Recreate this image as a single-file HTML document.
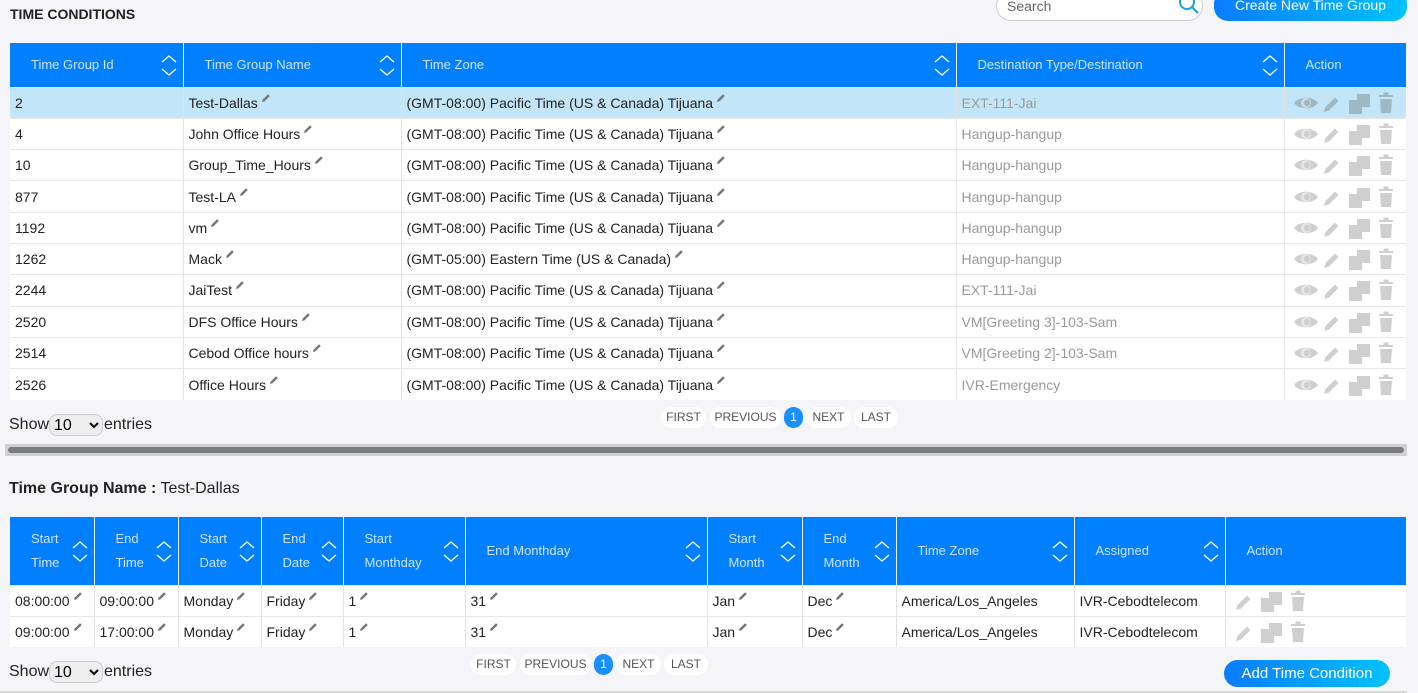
<!DOCTYPE html>
<html><head><meta charset="utf-8">
<style>
*{box-sizing:border-box;margin:0;padding:0}
body{width:1418px;height:693px;background:#f4f4f9;font-family:"Liberation Sans",sans-serif;position:relative;overflow:hidden;color:#222}
.abs{position:absolute}
table{position:absolute;border-collapse:collapse;table-layout:fixed}
th{background:#0080ff;color:#cfe3ff;font-weight:normal;font-size:13px;text-align:left;border-right:1px solid #e8f1ff;position:relative;padding-left:21px;line-height:24px}
th:last-child{border-right:none}
td{font-size:14px;border-right:1px solid #e2e2e2;border-top:1px solid #e6e6e6;padding-left:5px;background:#fff;white-space:nowrap;overflow:hidden}
td:last-child{border-right:none}
tr.sel td{background:#c2e6f7}
.g{color:#9a9a9a}
.s{position:absolute;right:5px;top:50%;margin-top:-11px}
.pen{display:inline-block;vertical-align:top;margin-left:3px;margin-top:-2px}
.pg{position:absolute;font-size:12px;color:#555;background:#fff;border-radius:10px;height:21px;line-height:21px;text-align:center}
.pg.on{background:#1a8fff;color:#fff}
.btn{position:absolute;color:#fff;font-size:14px;text-align:center;border-radius:14px;background:linear-gradient(90deg,#0a7cff,#00c2ff)}
select{font-size:16px}
.sh{position:absolute;font-size:16px;line-height:22px}
.sh select{position:absolute;left:40px;top:0;width:54px;height:22px;border-radius:8px;border:1px solid #ccc;background:#eee}
.sh span{position:absolute;left:95px;top:0}
</style></head><body>
<svg width="0" height="0" style="position:absolute">
<defs>
<symbol id="sort" viewBox="0 0 18 24"><path d="M2 8 L9 2 L16 8 M2 15 L9 21 L16 15" fill="none" stroke="#fff" stroke-width="1.3"/></symbol>
<symbol id="pn" viewBox="0 0 10 10"><path d="M1 9 L1.6 6.6 L7 1.2 L8.8 3 L3.4 8.4 Z" fill="#777"/></symbol>
<symbol id="acts" viewBox="0 0 100 22"><g fill="currentColor"><path d="M0 11 C5 4 19 4 24 11 C19 18 5 18 0 11Z"/><circle cx="12" cy="11" r="5" fill="#fff" opacity=".5"/><circle cx="13" cy="11" r="3.2"/><path d="M30 20 L31.5 15 L41 5.5 L44.5 9 L35 18.5 Z"/><rect x="63" y="2" width="13" height="13"/><rect x="55" y="8" width="13" height="14"/><rect x="85" y="3" width="14" height="2"/><rect x="89.5" y="0.5" width="5" height="3"/><path d="M86 7 H98 L97 21 H87 Z"/></g></symbol>
<symbol id="acts3" viewBox="28 0 72 22"><g fill="currentColor"><path d="M30 20 L31.5 15 L41 5.5 L44.5 9 L35 18.5 Z"/><rect x="63" y="2" width="13" height="13"/><rect x="55" y="8" width="13" height="14"/><rect x="85" y="3" width="14" height="2"/><rect x="89.5" y="0.5" width="5" height="3"/><path d="M86 7 H98 L97 21 H87 Z"/></g></symbol>
</defs></svg>

<div class="abs" style="left:10px;top:6px;font-size:14px;font-weight:bold;color:#222">TIME CONDITIONS</div>
<div class="abs" style="left:996px;top:-10px;width:207px;height:31px;background:#fff;border:1px solid #ccc;border-radius:15px;font-size:14px;color:#666;padding:7px 0 0 10px;line-height:17px">Search
<svg style="position:absolute;right:2px;top:2px" width="22" height="22" viewBox="0 0 22 22"><circle cx="9" cy="9" r="7" fill="none" stroke="#1aa0e8" stroke-width="2"/><path d="M14 14 L20 20" stroke="#1aa0e8" stroke-width="2"/></svg></div>
<div class="btn" style="left:1214px;top:-10px;width:193px;height:31px;line-height:31px">Create New Time Group</div>

<table style="left:10px;top:43px;width:1396px">
<colgroup><col style="width:173px"><col style="width:218px"><col style="width:555px"><col style="width:328px"><col style="width:122px"></colgroup>
<tr style="height:44px"><th>Time Group Id<svg class="s" width="18" height="24"><use href="#sort"/></svg></th><th>Time Group Name<svg class="s" width="18" height="24"><use href="#sort"/></svg></th><th>Time Zone<svg class="s" width="18" height="24"><use href="#sort"/></svg></th><th>Destination Type/Destination<svg class="s" width="18" height="24"><use href="#sort"/></svg></th><th>Action</th></tr>
<tr class="sel" style="height:31.3px"><td>2</td><td>Test-Dallas<svg class="pen" width="10" height="10"><use href="#pn"/></svg></td><td>(GMT-08:00) Pacific Time (US &amp; Canada) Tijuana<svg class="pen" width="10" height="10"><use href="#pn"/></svg></td><td class="g">EXT-111-Jai</td><td><svg width="100" height="22" style="margin-left:4px;vertical-align:middle;color:#9fb9c4"><use href="#acts"/></svg></td></tr>
<tr style="height:31.3px"><td>4</td><td>John Office Hours<svg class="pen" width="10" height="10"><use href="#pn"/></svg></td><td>(GMT-08:00) Pacific Time (US &amp; Canada) Tijuana<svg class="pen" width="10" height="10"><use href="#pn"/></svg></td><td class="g">Hangup-hangup</td><td><svg width="100" height="22" style="margin-left:4px;vertical-align:middle;color:#cfcfcf"><use href="#acts"/></svg></td></tr>
<tr style="height:31.3px"><td>10</td><td>Group_Time_Hours<svg class="pen" width="10" height="10"><use href="#pn"/></svg></td><td>(GMT-08:00) Pacific Time (US &amp; Canada) Tijuana<svg class="pen" width="10" height="10"><use href="#pn"/></svg></td><td class="g">Hangup-hangup</td><td><svg width="100" height="22" style="margin-left:4px;vertical-align:middle;color:#cfcfcf"><use href="#acts"/></svg></td></tr>
<tr style="height:31.3px"><td>877</td><td>Test-LA<svg class="pen" width="10" height="10"><use href="#pn"/></svg></td><td>(GMT-08:00) Pacific Time (US &amp; Canada) Tijuana<svg class="pen" width="10" height="10"><use href="#pn"/></svg></td><td class="g">Hangup-hangup</td><td><svg width="100" height="22" style="margin-left:4px;vertical-align:middle;color:#cfcfcf"><use href="#acts"/></svg></td></tr>
<tr style="height:31.3px"><td>1192</td><td>vm<svg class="pen" width="10" height="10"><use href="#pn"/></svg></td><td>(GMT-08:00) Pacific Time (US &amp; Canada) Tijuana<svg class="pen" width="10" height="10"><use href="#pn"/></svg></td><td class="g">Hangup-hangup</td><td><svg width="100" height="22" style="margin-left:4px;vertical-align:middle;color:#cfcfcf"><use href="#acts"/></svg></td></tr>
<tr style="height:31.3px"><td>1262</td><td>Mack<svg class="pen" width="10" height="10"><use href="#pn"/></svg></td><td>(GMT-05:00) Eastern Time (US &amp; Canada)<svg class="pen" width="10" height="10"><use href="#pn"/></svg></td><td class="g">Hangup-hangup</td><td><svg width="100" height="22" style="margin-left:4px;vertical-align:middle;color:#cfcfcf"><use href="#acts"/></svg></td></tr>
<tr style="height:31.3px"><td>2244</td><td>JaiTest<svg class="pen" width="10" height="10"><use href="#pn"/></svg></td><td>(GMT-08:00) Pacific Time (US &amp; Canada) Tijuana<svg class="pen" width="10" height="10"><use href="#pn"/></svg></td><td class="g">EXT-111-Jai</td><td><svg width="100" height="22" style="margin-left:4px;vertical-align:middle;color:#cfcfcf"><use href="#acts"/></svg></td></tr>
<tr style="height:31.3px"><td>2520</td><td>DFS Office Hours<svg class="pen" width="10" height="10"><use href="#pn"/></svg></td><td>(GMT-08:00) Pacific Time (US &amp; Canada) Tijuana<svg class="pen" width="10" height="10"><use href="#pn"/></svg></td><td class="g">VM[Greeting 3]-103-Sam</td><td><svg width="100" height="22" style="margin-left:4px;vertical-align:middle;color:#cfcfcf"><use href="#acts"/></svg></td></tr>
<tr style="height:31.3px"><td>2514</td><td>Cebod Office hours<svg class="pen" width="10" height="10"><use href="#pn"/></svg></td><td>(GMT-08:00) Pacific Time (US &amp; Canada) Tijuana<svg class="pen" width="10" height="10"><use href="#pn"/></svg></td><td class="g">VM[Greeting 2]-103-Sam</td><td><svg width="100" height="22" style="margin-left:4px;vertical-align:middle;color:#cfcfcf"><use href="#acts"/></svg></td></tr>
<tr style="height:31.3px"><td>2526</td><td>Office Hours<svg class="pen" width="10" height="10"><use href="#pn"/></svg></td><td>(GMT-08:00) Pacific Time (US &amp; Canada) Tijuana<svg class="pen" width="10" height="10"><use href="#pn"/></svg></td><td class="g">IVR-Emergency</td><td><svg width="100" height="22" style="margin-left:4px;vertical-align:middle;color:#cfcfcf"><use href="#acts"/></svg></td></tr>
</table>

<div class="sh" style="left:9px;top:414px">Show<select><option>10</option></select><span>entries</span></div>
<div class="pg" style="left:661px;top:407px;width:45px">FIRST</div>
<div class="pg" style="left:710px;top:407px;width:71px">PREVIOUS</div>
<div class="pg on" style="left:784px;top:407px;width:19px">1</div>
<div class="pg" style="left:806px;top:407px;width:45px">NEXT</div>
<div class="pg" style="left:854px;top:407px;width:44px">LAST</div>

<div class="abs" style="left:5px;top:444px;width:1402px;height:12px;background:#d0d0d0"></div>
<div class="abs" style="left:8px;top:447px;width:1396px;height:6px;background:#7a7d80;border-radius:3px"></div>

<div class="abs" style="left:9px;top:480px;font-size:16px"><b>Time Group Name :</b> Test-Dallas</div>

<table style="left:10px;top:517px;width:1396px">
<colgroup><col style="width:84px"><col style="width:84px"><col style="width:83px"><col style="width:82px"><col style="width:122px"><col style="width:242px"><col style="width:95px"><col style="width:94px"><col style="width:178px"><col style="width:151px"><col style="width:181px"></colgroup>
<tr style="height:68px"><th>Start<br>Time<svg class="s" width="18" height="24"><use href="#sort"/></svg></th><th>End<br>Time<svg class="s" width="18" height="24"><use href="#sort"/></svg></th><th>Start<br>Date<svg class="s" width="18" height="24"><use href="#sort"/></svg></th><th>End<br>Date<svg class="s" width="18" height="24"><use href="#sort"/></svg></th><th>Start<br>Monthday<svg class="s" width="18" height="24"><use href="#sort"/></svg></th><th>End Monthday<svg class="s" width="18" height="24"><use href="#sort"/></svg></th><th>Start<br>Month<svg class="s" width="18" height="24"><use href="#sort"/></svg></th><th>End<br>Month<svg class="s" width="18" height="24"><use href="#sort"/></svg></th><th>Time Zone<svg class="s" width="18" height="24"><use href="#sort"/></svg></th><th>Assigned<svg class="s" width="18" height="24"><use href="#sort"/></svg></th><th>Action</th></tr>
<tr style="height:31px"><td>08:00:00<svg class="pen" width="10" height="10"><use href="#pn"/></svg></td><td>09:00:00<svg class="pen" width="10" height="10"><use href="#pn"/></svg></td><td>Monday<svg class="pen" width="10" height="10"><use href="#pn"/></svg></td><td>Friday<svg class="pen" width="10" height="10"><use href="#pn"/></svg></td><td>1<svg class="pen" width="10" height="10"><use href="#pn"/></svg></td><td>31<svg class="pen" width="10" height="10"><use href="#pn"/></svg></td><td>Jan<svg class="pen" width="10" height="10"><use href="#pn"/></svg></td><td>Dec<svg class="pen" width="10" height="10"><use href="#pn"/></svg></td><td>America/Los_Angeles</td><td>IVR-Cebodtelecom</td><td><svg width="72" height="22" style="margin-left:3px;vertical-align:middle;color:#cfcfcf"><use href="#acts3"/></svg></td></tr>
<tr style="height:31px"><td>09:00:00<svg class="pen" width="10" height="10"><use href="#pn"/></svg></td><td>17:00:00<svg class="pen" width="10" height="10"><use href="#pn"/></svg></td><td>Monday<svg class="pen" width="10" height="10"><use href="#pn"/></svg></td><td>Friday<svg class="pen" width="10" height="10"><use href="#pn"/></svg></td><td>1<svg class="pen" width="10" height="10"><use href="#pn"/></svg></td><td>31<svg class="pen" width="10" height="10"><use href="#pn"/></svg></td><td>Jan<svg class="pen" width="10" height="10"><use href="#pn"/></svg></td><td>Dec<svg class="pen" width="10" height="10"><use href="#pn"/></svg></td><td>America/Los_Angeles</td><td>IVR-Cebodtelecom</td><td><svg width="72" height="22" style="margin-left:3px;vertical-align:middle;color:#cfcfcf"><use href="#acts3"/></svg></td></tr>
</table>

<div class="sh" style="left:9px;top:661px">Show<select><option>10</option></select><span>entries</span></div>
<div class="pg" style="left:471px;top:654px;width:45px">FIRST</div>
<div class="pg" style="left:520px;top:654px;width:71px">PREVIOUS</div>
<div class="pg on" style="left:594px;top:654px;width:19px">1</div>
<div class="pg" style="left:616px;top:654px;width:45px">NEXT</div>
<div class="pg" style="left:664px;top:654px;width:44px">LAST</div>
<div class="btn" style="left:1224px;top:660px;width:166px;height:27px;line-height:27px;font-size:15px">Add Time Condition</div>
<div class="abs" style="left:0;top:691px;width:1407px;height:2px;background:#d8d8d8"></div>
</body></html>
